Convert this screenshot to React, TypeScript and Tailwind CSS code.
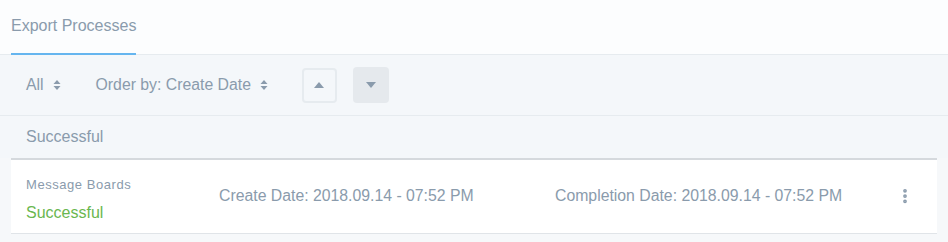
import { MoreVertical } from "lucide-react";

function SortIcon() {
  return (
    <svg width="8" height="12" viewBox="0 0 8 12" className="ml-[9px]">
      <path d="M4 1 L7.5 5 H0.5 Z" fill="#8a9bac" />
      <path d="M4 11 L7.5 7 H0.5 Z" fill="#8a9bac" />
    </svg>
  );
}

export default function App() {
  return (
    <div
      className="w-[948px] h-[242px] bg-[#f6f8fa] text-[#8a9bac] overflow-hidden"
      style={{ fontFamily: '"Liberation Sans", Arial, sans-serif' }}
    >
      {/* Tabs */}
      <div className="h-[55px] bg-[#fcfdfe] border-b border-[#e6ebef] flex items-end pl-[11px]">
        <div className="h-[54px] flex items-center border-b-2 border-[#65b5ef] text-[16px] mb-[-1px] pb-[2px]">
          Export Processes
        </div>
      </div>

      {/* Toolbar */}
      <div className="h-[61px] bg-[#f4f7fa] border-b border-[#e6ebef] flex items-center pl-[26px] text-[15.8px]">
        <button className="flex items-center">
          All
          <SortIcon />
        </button>
        <button className="flex items-center ml-[35px]">
          Order by: Create Date
          <SortIcon />
        </button>
        <button className="ml-[34px] w-[35px] h-[35px] rounded-[4px] border-2 border-[#e6ebef] flex items-center justify-center">
          <svg width="10" height="6" viewBox="0 0 10 6">
            <path d="M5 0 L10 6 H0 Z" fill="#8a9bac" />
          </svg>
        </button>
        <button className="ml-[16px] w-[36px] h-[36px] rounded-[4px] bg-[#e5e9ed] flex items-center justify-center">
          <svg width="10" height="6" viewBox="0 0 10 6">
            <path d="M0 0 H10 L5 6 Z" fill="#8a9bac" />
          </svg>
        </button>
      </div>

      {/* Group header */}
      <div className="h-[42px] bg-[#f4f7fa] flex items-center pl-[26px] text-[16px]">
        Successful
      </div>

      {/* Card */}
      <div className="ml-[11px] w-[926px] h-[76px] bg-white border-b border-[#e0e4e8] shadow-[inset_0_2px_0_#d5d9dd] flex items-stretch pl-[15px] text-[15.8px]">
        <div className="w-[193px] flex flex-col pt-[19px]">
          <span className="text-[13px] tracking-[0.55px] leading-[16px]">Message Boards</span>
          <span className="text-[16px] text-[#6ab750] mt-[10px] leading-[19px]">Successful</span>
        </div>
        <div className="w-[336px] flex items-center">Create Date: 2018.09.14 - 07:52 PM</div>
        <div className="flex-1 flex items-center">Completion Date: 2018.09.14 - 07:52 PM</div>
        <div className="flex items-center mr-[23px]">
          <MoreVertical size={18} strokeWidth={3} />
        </div>
      </div>
    </div>
  );
}
